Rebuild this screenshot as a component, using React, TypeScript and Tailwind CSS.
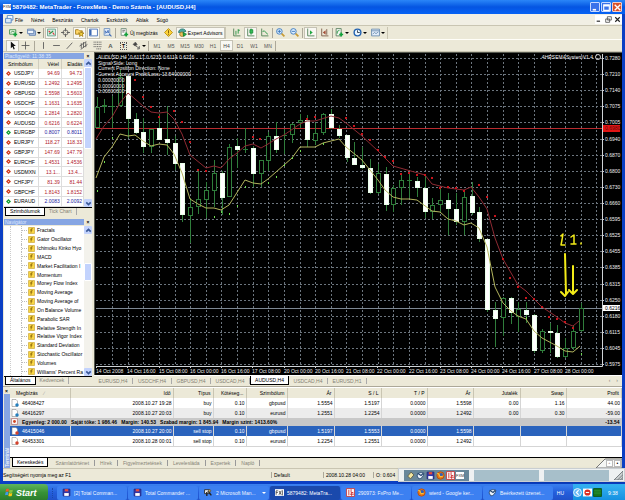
import type { ReactNode } from 'react';

type Candle = [top: number, bottom: number, high: number, low: number, down: number];

const candles: Candle[] = [
  [107, 128, 97, 128, 0], [105, 107, 99, 113, 0], [106, 106, 96, 128, 0], [77, 106, 70, 107, 0],
  [76, 119, 76, 138, 1], [119, 133, 113, 134, 1], [132, 147, 118, 153, 1], [129, 147, 129, 153, 0],
  [128, 140, 114, 140, 1], [139, 143, 106, 155, 1], [143, 164, 136, 170, 1], [163, 215, 163, 222, 1],
  [207, 216, 198, 243, 0], [199, 207, 171, 214, 0], [190, 200, 182, 218, 0], [173, 191, 160, 207, 0],
  [173, 198, 171, 215, 1], [147, 197, 144, 197, 0], [146, 150, 138, 168, 1], [149, 149, 128, 153, 0],
  [148, 174, 146, 187, 1], [160, 174, 160, 187, 0], [136, 161, 132, 171, 0], [136, 150, 122, 153, 1],
  [135, 135, 129, 154, 0], [124, 135, 123, 143, 0], [120, 123, 114, 128, 0], [120, 140, 115, 147, 1],
  [133, 141, 123, 145, 0], [114, 133, 113, 135, 0], [114, 128, 109, 129, 1], [129, 136, 125, 138, 1],
  [135, 158, 135, 162, 1], [158, 165, 142, 165, 1], [165, 168, 147, 169, 1], [168, 193, 159, 194, 1],
  [173, 193, 164, 194, 0], [174, 205, 167, 211, 1], [188, 205, 185, 212, 0], [180, 188, 174, 205, 0],
  [180, 180, 172, 198, 0], [181, 188, 177, 197, 1], [188, 212, 175, 218, 1], [205, 212, 198, 219, 0],
  [200, 205, 188, 213, 0], [200, 209, 193, 235, 1], [209, 222, 193, 225, 1], [197, 222, 190, 235, 0],
  [196, 213, 182, 215, 1], [212, 239, 207, 242, 1], [239, 310, 239, 312, 1], [310, 319, 302, 347, 1],
  [298, 318, 297, 336, 0], [298, 313, 297, 324, 1], [309, 317, 302, 332, 0], [310, 315, 302, 323, 1],
  [315, 351, 314, 353, 1], [331, 351, 329, 353, 0], [331, 333, 323, 353, 1], [333, 357, 325, 358, 1],
  [348, 357, 338, 358, 0], [331, 348, 325, 350, 0], [308, 331, 303, 332, 0],
];

const upperLine =
  '96,139 104,126 112,117 120,103 128,93 135,99 143,106 151,112 159,113 167,112 174,119 182,134 190,155 206,168 214,166 221,168 229,159 237,153 245,146 253,144 261,148 268,144 276,139 284,135 300,124 307,121 315,121 331,116 339,118 346,123 362,136 378,151 393,166 425,175 432,184 448,188 456,189 464,190 471,187 479,197 487,209 495,238 503,259 518,285 526,291 534,299 542,307 557,317 565,323 573,326 579,321';
const lowerLine =
  '96,178 104,157 112,147 120,134 128,136 135,135 143,141 151,146 159,144 167,145 174,154 182,173 190,199 198,204 206,208 214,208 221,210 229,205 245,180 253,183 261,184 268,179 276,172 284,165 292,158 300,147 315,147 323,143 339,139 346,147 362,160 378,180 385,190 393,197 401,199 409,199 417,200 432,211 440,212 448,219 456,221 464,225 471,223 479,228 487,247 495,287 503,303 511,311 518,316 526,319 534,331 542,338 557,346 565,351 573,352 580,346';

const redDots = [
  [135, 80], [143, 97], [151, 107], [159, 117], [174, 111], [182, 122], [190, 142], [198, 170], [206, 171],
  [253, 137], [260, 139], [307, 119], [315, 117], [346, 118], [354, 126], [362, 134], [370, 140], [378, 150],
  [385, 157], [393, 161], [401, 174], [409, 173], [417, 175], [425, 175], [432, 178], [440, 188], [448, 187],
  [456, 188], [464, 191], [479, 185], [487, 197], [495, 216], [503, 259], [510, 278], [518, 287], [526, 298],
  [534, 299], [542, 307], [549, 317], [557, 319], [565, 322], [573, 328],
];
const greenDots = [
  [97, 191], [104, 162], [112, 138], [214, 217], [221, 212], [229, 214], [237, 206], [245, 187], [268, 183],
  [276, 177], [284, 165], [292, 158], [300, 151], [323, 144], [526, 318], [581, 354],
];

const prices = [
  '0.7280', '0.7210', '0.7140', '0.7075', '0.7005', '0.6940', '0.6870', '0.6800', '0.6730', '0.6660',
  '0.6595', '0.6525', '0.6455', '0.6385', '0.6315', '0.6250', '0.6180', '0.6115', '0.6045', '0.5975',
];
const times = [
  '14 Oct 2008', '14 Oct 16:00', '15 Oct 08:00', '16 Oct 00:00', '16 Oct 16:00', '17 Oct 08:00',
  '20 Oct 00:00', '20 Oct 16:00', '21 Oct 08:00', '22 Oct 00:00', '22 Oct 16:00', '23 Oct 08:00',
  '24 Oct 00:00', '24 Oct 16:00', '27 Oct 08:00', '28 Oct 00:00',
];
const notes = [
  'AUDUSD,H4  0.6117 0.6233 0.6114 0.6216', 'Signal Side: Long', 'Current Position Direction: None',
  'Current Account Profit/Loss: 13.54000000', '0.00000000', '0.00000000', '0.00000000',
];

const quotes = [
  ['USDJPY', '94.69', '94.73'], ['EURUSD', '1.2492', '1.2495'], ['GBPUSD', '1.5598', '1.5603'],
  ['USDCHF', '1.1631', '1.1635'], ['USDCAD', '1.2814', '1.2820'], ['AUDUSD', '0.6216', '0.6224'],
  ['EURGBP', '0.8007', '0.8011'], ['EURJPY', '118.27', '118.33'], ['GBPJPY', '147.69', '147.79'],
  ['EURCHF', '1.4531', '1.4536'], ['USDMXN', '13.1...', '13.4...'], ['CHFJPY', '81.39', '81.44'],
  ['GBPCHF', '1.8143', '1.8152'], ['EURAUD', '2.0083', '2.0092'],
];
const rising = ['EURGBP', 'EURAUD'];

const indicators = [
  'Fractals', 'Gator Oscillator', 'Ichimoku Kinko Hyo', 'MACD', 'Market Facilitation I', 'Momentum',
  'Money Flow Index', 'Moving Average', 'Moving Average of', 'On Balance Volume', 'Parabolic SAR',
  'Relative Strength In', 'Relative Vigor Index', 'Standard Deviation', 'Stochastic Oscillator', 'Volumes',
  "Williams' Percent Ra",
];

const orders = [
  ['46408427', '2008.10.27 19:28', 'buy', '0.10', 'gbpusd', '1.5554', '1.5197', '0.0000', '1.5598', '0.00', '1.16', '44.00'],
  ['46416297', '2008.10.27 20:03', 'buy', '0.10', 'eurusd', '1.2551', '1.2254', '0.0000', '1.2492', '0.00', '0.30', '-59.00'],
];
const pending = [
  ['46415046', '2008.10.27 20:00', 'sell stop', '0.10', 'gbpusd', '1.5197', '1.5553', '0.0000', '1.5598', '', '', ''],
  ['46453301', '2008.10.28 00:01', 'sell stop', '0.10', 'eurusd', '1.2254', '1.2551', '0.0000', '1.2492', '', '', ''],
];
const columns = ['Megbízás', 'Idő', 'Típus', 'Kötéseg...', 'Szimbólum', 'Ár', 'S / L', 'T / P', 'Ár', 'Jutalék', 'Swap', 'Profit'];

function Glyph({ children }: { readonly children: ReactNode }) {
  return (
    <svg viewBox="0 0 16 16" className="size-[9px] shrink-0" fill="none" stroke="#555" strokeWidth="1.5" aria-hidden="true">
      {children}
    </svg>
  );
}

const floppy = (
  <>
    <path d="M2 2h12v12H2z" fill="#3438a8" stroke="#22267c" />
    <path d="M5 2h6v4H5z" fill="#e64b3c" stroke="none" />
    <path d="M4 9h8v5H4z" fill="#fff" stroke="none" />
  </>
);
const firefox = (
  <>
    <circle cx="8" cy="8" r="6.5" fill="#e8761a" stroke="#b84d0c" />
    <circle cx="9" cy="7" r="3.5" fill="#345fb3" stroke="none" />
    <path d="M2 5c3-1 4 1 4 3s3 3 6 1" stroke="#ffc12e" strokeWidth="2" />
  </>
);
const bird = (
  <>
    <path d="M2 9c0-5 6-8 12-5-1 6-4 10-9 10z" fill="#e8f1fa" stroke="#24446d" />
    <path d="M3 4l6 4 4-4" stroke="#24446d" strokeWidth="2" />
  </>
);
const redGrid = (
  <>
    <path d="M1 1h14v14H1z" fill="#fff" stroke="#c33" />
    <path d="M5 3v10M9 2v6h4M7 11h7M10 9v5" stroke="#c22" />
  </>
);
const plus = <path d="M11 8v7M7.500 11.500h7" stroke="#12a33a" strokeWidth="3" />;

function Separator() {
  return <div className="h-[10px] w-px bg-[#aca899]" />;
}

function Tool({ label, pressed, drop, children }: {
  readonly label: string;
  readonly pressed?: boolean;
  readonly drop?: boolean;
  readonly children: ReactNode;
}) {
  return (
    <button
      aria-label={label}
      className={pressed
        ? 'flex h-[12px] w-[13px] items-center justify-center border border-[#c5c2b4] bg-[#f9f8f3]'
        : drop
          ? 'flex h-[12px] w-[17px] items-center justify-center gap-px'
          : 'flex h-[12px] w-[13px] items-center justify-center'}
    >
      <Glyph>{children}</Glyph>
      {drop && <span className="border-x-2 border-t-2 border-x-transparent border-t-black" />}
    </button>
  );
}

const timeframes = ['M1', 'M5', 'M15', 'M30', 'H1', 'H4', 'D1', 'W1', 'MN'];

function Toolbars() {
  return (
    <div className="bg-[#ece9d8]">
      <div className="flex h-[14px] items-center border-t border-[#c9c5b2]">
        <div className="flex items-center gap-px border-r border-[#c9c5b2] pl-[4px]">
          <Tool label="Új grafikon" drop><path d="M1 3h11v8H1z" fill="#e8f6e4" stroke="#398a46" /><path d="M3 8l3-2 4 1" stroke="#398a46" />{plus}</Tool>
          <Tool label="Profilok" drop><path d="M4 5h11v8H4z" fill="#b9cde8" stroke="#5d7eae" /><path d="M1 2h11v8H1z" fill="#eef4fb" stroke="#5d7eae" /><path d="M1 4h11" stroke="#5d7eae" /></Tool>
          <Separator />
          <Tool label="Piacfigyelő" pressed><path d="M1 2h14v12H1z" fill="#dcefe5" stroke="#5d9b83" /><path d="M3 5l3 3M10 8l3 4" stroke="#d33" strokeWidth="2" /><path d="M4 11l7-6" stroke="#199040" strokeWidth="2" /></Tool>
          <Tool label="Adatablak"><circle cx="8" cy="8" r="4.500" /><path d="M8 0v6M8 10v6M0 8h6M10 8h6" /></Tool>
          <Tool label="Navigátor" pressed><path d="M1 3h5l2 2h5v6H1z" fill="#ffd768" stroke="#a27b15" /><path d="M11 6l1 3 4 0-3 2 1 4-3-2-3 2 1-4-3-2h4z" fill="#ffe34d" stroke="#a27b15" /></Tool>
          <Tool label="Terminál" pressed><path d="M1 2h14v12H1z" fill="#fff" stroke="#3c69b4" /><path d="M3 3v10" stroke="#3c69b4" strokeWidth="3" /></Tool>
          <Tool label="Stratégia teszter"><path d="M2 1h10v12H2z" fill="#e4eefa" stroke="#6a8dbd" /><path d="M4 10V5l3 4 2-5 1 5" stroke="#3c69b4" /><path d="M11 11l4 4" stroke="#3c69b4" strokeWidth="2" /></Tool>
          <Separator />
          <button className="flex items-center gap-px pl-[3px] pr-[3px]">
            <Glyph><path d="M2 1h9v12H2z" fill="#fff" stroke="#6d8a76" /><path d="M4 4h5M4 7h4" />{plus}</Glyph>
            Új megbízás
          </button>
          <Tool label="Figyelmeztetés"><path d="M8 1l7 7-7 7-7-7z" fill="#ffd43a" stroke="#b28700" /><path d="M8 4v5M8 10v2" stroke="#6b4d00" /></Tool>
          <button className="flex h-[12px] items-center gap-px border border-[#c5c2b4] bg-[#f9f8f3] px-px">
            <Glyph><path d="M1 8c0-8 12-8 13-2l-6 2z" fill="#49a79f" stroke="#28766d" /><circle cx="7" cy="11" r="4" fill="#e9be5d" stroke="#9a7629" /><path d="M9 8l6 3-5 4z" fill="#26b34a" stroke="#0f7d2c" /></Glyph>
            Expert Advisors
          </button>
        </div>
        <div className="flex items-center gap-px border-r border-[#c9c5b2] pl-[4px]">
          <Tool label="Oszlopok"><path d="M3 1v13h12" stroke="#477a4d" /><path d="M7 5v7M11 2v8M11 4h3" stroke="#168d34" /></Tool>
          <Tool label="Gyertyák" pressed><path d="M3 1v13h12" stroke="#477a4d" /><path d="M9 1v11" stroke="#168d34" /><path d="M7 3h5v6H7z" fill="#36bd58" stroke="#168d34" /></Tool>
          <Tool label="Vonal"><path d="M3 1v13h12" stroke="#477a4d" /><path d="M5 7c3-6 4 2 9 4" stroke="#168d34" /></Tool>
          <Separator />
          <Tool label="Nagyítás"><circle cx="6" cy="6" r="5" fill="#d9ecff" stroke="#3472b8" /><path d="M6 3v6M3 6h6" stroke="#3472b8" /><path d="M10 10l5 5" stroke="#c79b35" strokeWidth="3" /></Tool>
          <Tool label="Kicsinyítés"><circle cx="6" cy="6" r="5" fill="#d9ecff" stroke="#3472b8" /><path d="M3 6h6" stroke="#3472b8" /><path d="M10 10l5 5" stroke="#c79b35" strokeWidth="3" /></Tool>
          <Separator />
          <Tool label="Automatikus görgetés" pressed><path d="M3 1v13h12" stroke="#477a4d" /><path d="M7 4l5 4-5 4z" fill="#24a844" stroke="none" /></Tool>
          <Tool label="Eltolás"><path d="M3 1v13h12M12 2v10" stroke="#75533f" /><path d="M10 4L5 8l5 4z" fill="#a24d36" stroke="none" /></Tool>
          <Separator />
          <Tool label="Indikátorok" drop><path d="M2 1h9v13H2z" fill="#f1f6ef" stroke="#577d5c" /><path d="M4 10V6l4-2" stroke="#168d34" />{plus}</Tool>
          <Tool label="Periódusok" drop><circle cx="8" cy="8" r="6" fill="#eaf5ff" stroke="#2362b0" strokeWidth="2.500" /><path d="M8 4v4h4" stroke="#234" /></Tool>
          <Tool label="Sablonok" drop><path d="M1 2h14v12H1z" fill="#e4eefa" stroke="#6688ad" /><path d="M1 5h14M3 11l3-3 3 2 4-3" stroke="#6688ad" /></Tool>
        </div>
      </div>
      <div className="flex h-[13px] items-center border-y border-t-[#fffef8] border-b-[#c9c5b2]">
        <div className="flex items-center pl-[3px]">
          <Tool label="Kurzor" pressed><path d="M5 1v12l3-3 2 5 2-1-2-5h4z" fill="#111" stroke="none" /></Tool>
          <Tool label="Célkereszt"><path d="M8 1v14M1 8h14" /></Tool>
          <div className="px-[2px]"><Separator /></div>
          <Tool label="Függőleges vonal"><path d="M8 2v12" /></Tool>
          <Tool label="Vízszintes vonal"><path d="M2 8h12" /></Tool>
          <Tool label="Trendvonal"><path d="M3 14L13 3" /></Tool>
          <div className="px-px"><Tool label="Csatorna"><path d="M1 9l12-8M3 15l12-9M4 4v9M8 2v10M12 2v9" /></Tool></div>
          <Tool label="Fibonacci"><path d="M1 2h14M1 6h14M1 10h14M6 14h9" strokeDasharray="2 1" /></Tool>
          <button className="w-[13px] text-center font-bold text-[6px] text-[#555]">A</button>
          <button className="flex w-[13px] justify-center"><span className="border border-dotted border-[#555] px-px font-bold leading-[6px]">T</span></button>
          <Tool label="Nyilak" drop><path d="M2 6l4-4 3 4-3 3z" fill="#444" /><path d="M7 9l6 4M13 9v5H9" /></Tool>
          <div className="px-px"><Separator /></div>
          {timeframes.map((t) => (
            <button key={t} className={t === 'H4' ? 'h-[11px] w-[13px] border border-[#c5c2b4] bg-[#f9f8f3] text-[#444]' : 'w-[14px] text-[#555]'}>{t}</button>
          ))}
          <Separator />
        </div>
      </div>
    </div>
  );
}

function Scrollbar({ thumb }: { readonly thumb: string }) {
  return (
    <div className="flex w-[8px] shrink-0 flex-col bg-[#f3f2ec]">
      <button aria-label="Fel" className="flex h-[8px] items-center justify-center rounded-[1px] bg-[#c3d3fd]"><Glyph><path d="M4 10l4-4 4 4" stroke="#3b5998" strokeWidth="3" /></Glyph></button>
      <div className="flex-1"><div className={thumb} /></div>
      <button aria-label="Le" className="flex h-[8px] items-center justify-center rounded-[1px] bg-[#c3d3fd]"><Glyph><path d="M4 6l4 4 4-4" stroke="#3b5998" strokeWidth="3" /></Glyph></button>
    </div>
  );
}

function PanelTitle({ title }: { readonly title: string }) {
  return (
    <div className="flex h-[6px] items-center">
      <span className="flex h-full flex-1 items-center bg-[#86a5e3] pl-px text-[#dce8ff]">{title}</span>
      <button aria-label="Bezárás" className="w-[8px] font-bold">×</button>
    </div>
  );
}

function PanelTabs({ tabs }: { readonly tabs: string[] }) {
  return (
    <div className="flex h-[10px] shrink-0 items-start border-t border-black bg-[#ece9d8]">
      {tabs.map((tab, i) => (
        <button key={tab} className={i === 0
          ? 'ml-px h-[8px] border-x border-b border-black bg-white px-[4px] leading-[7px]'
          : 'border-r border-[#aaa] px-[4px] leading-[7px] text-[#858275]'}>{tab}</button>
      ))}
    </div>
  );
}

function MarketWatch() {
  return (
    <section className="flex h-[164px] flex-col">
      <PanelTitle title="Piacfigyelő: 11:38:35" />
      <div className="flex h-[148px] overflow-hidden bg-white">
        <table className="h-full flex-1 table-fixed border-collapse">
          <colgroup><col className="w-[34px]" /><col className="w-[23px]" /><col className="w-[22px]" /></colgroup>
          <thead>
            <tr className="h-[10px] bg-[#ece9d8]">
              <th className="border-r border-[#d0cdbe] pl-[4px] text-left font-normal">Szimbólum</th>
              <th className="border-r border-[#d0cdbe] pr-[2px] text-right font-normal">Vétel</th>
              <th className="pr-px text-right font-normal">Eladás</th>
            </tr>
          </thead>
          <tbody>
            {quotes.map(([symbol, bid, ask]) => {
              const up = rising.includes(symbol);
              return (
                <tr key={symbol} className={up ? 'border-b border-[#ddd] text-[#1a1aa0]' : 'border-b border-[#ddd] text-[#b0202a]'}>
                  <td className="border-r border-[#ddd] pl-[2px]">
                    <span className="flex items-center gap-[3px] text-black">
                      <svg viewBox="0 0 10 10" className="size-[5px] shrink-0" aria-hidden="true"><path d="M5 0l5 5-5 5-5-5z" fill={up ? '#17a035' : '#d13f22'} /><circle cx="5" cy="5" r="1" fill="#fff" /></svg>
                      {symbol}
                    </span>
                  </td>
                  <td className="border-r border-[#ddd] pr-px text-right">{bid}</td>
                  <td className="border-r border-[#ddd] pr-px text-right">{ask}</td>
                </tr>
              );
            })}
          </tbody>
        </table>
        <Scrollbar thumb="h-[82px] rounded-[1px] border border-white bg-[#c3d3fd]" />
      </div>
      <PanelTabs tabs={['Szimbólumok', 'Tick Chart']} />
    </section>
  );
}

function Navigator() {
  return (
    <section className="mt-[2px] flex flex-1 flex-col">
      <PanelTitle title="Navigátor" />
      <div className="mt-px flex h-[150px] bg-white">
        <ul className="ml-[6px] flex min-w-0 flex-1 flex-col border-l border-dotted border-[#ccc] pl-[10px]">
          {indicators.map((name) => (
            <li key={name} className="flex flex-1 items-center gap-[2px] whitespace-nowrap border-l border-dotted border-[#bbb]">
              <span className="-mr-px w-[5px] shrink-0 border-t border-dotted border-[#bbb]" />
              <svg viewBox="0 0 14 14" className="size-[7px] shrink-0" aria-hidden="true"><path d="M1 1h12v12H1z" fill="#f9d645" stroke="#bb8f17" /><path d="M9 3c-3-1-2 3-3 8M4 6h5" fill="none" stroke="#7a5600" strokeWidth="1.500" /></svg>
              {name}
            </li>
          ))}
        </ul>
        <Scrollbar thumb="mt-[29px] h-[18px] rounded-[1px] border border-white bg-[#c3d3fd]" />
      </div>
      <PanelTabs tabs={['Általános', 'Kedvencek']} />
    </section>
  );
}

const candleX = (i: number) => Math.round(96.5 + 7.8125 * i);
const rowY = (i: number) => Math.round(58 + 16.11 * i) + 0.5;
const timeX = (i: number) => Math.round(96 + 31.25 * i);

function Chart() {
  return (
    <svg viewBox="95 53 527 322" className="block h-auto w-full bg-black" role="img" aria-label="AUDUSD,H4">
      <g stroke="#6c757e" strokeWidth="1" strokeDasharray="2 2" shapeRendering="crispEdges">
        {prices.map((p, i) => <path key={p} d={`M96 ${rowY(i)}H602`} />)}
        {Array.from({ length: 32 }, (_, i) => <path key={i} d={`M${Math.round(112 + 15.625 * i) + 0.5} 54V366`} />)}
      </g>
      <path d="M96 128.500H602" stroke="#b92b2f" />
      <path d="M96 308.500H602" stroke="#7d8793" />
      {candles.map(([top, bottom, high, low, down], i) => (
        <g key={i} stroke="#2f7d3b" shapeRendering="crispEdges">
          <path d={`M${candleX(i) + 0.5} ${high}V${low}`} />
          {top === bottom
            ? <path d={`M${candleX(i) - 2} ${top + 0.5}h5`} />
            : <rect x={candleX(i) - 1.5} y={top + 0.5} width="4" height={bottom - top - 1} fill={down ? '#fff' : '#000'} stroke={down ? '#e9ffe9' : '#2f7d3b'} />}
        </g>
      ))}
      <polyline points={upperLine} fill="none" stroke="#8f2a33" />
      <polyline points={lowerLine} fill="none" stroke="#b3b55e" />
      {redDots.map(([x, y]) => <rect key={`${x}-${y}`} x={x - 1} y={y - 1} width="2" height="2" fill="#c8141c" />)}
      {greenDots.map(([x, y]) => <rect key={`${x}-${y}`} x={x} y={y - 1} width="1" height="2" fill="#6fdc52" />)}

      {/* hand-drawn marks */}
      <g fill="none" stroke="#f4ec18" strokeWidth="1.500" strokeLinecap="round" strokeLinejoin="round">
        <path d="M561 236l2-2-1 6-1 5h4M571 237l3-2v8M571 244h5M581 243v1" />
        <path d="M565 254l1 40M561 292l4 4 3-4M573 266v26M569 290l4 4 4-4" strokeWidth="2" />
      </g>

      <path d="M602.500 54V366.500M96 366.500H602.500" stroke="#cfd3d6" fill="none" />
      <rect x="603" y="125" width="17" height="7" fill="#e01515" />
      <rect x="603" y="305" width="17" height="6" fill="#fff" />
      <g fill="#eee" fontSize="5">
        {prices.map((p, i) => <text key={p} x="605" y={rowY(i) + 1.5}>{p}</text>)}
        {times.map((t, i) => <text key={t} x={timeX(i)} y="373">{t}</text>)}
        {notes.map((n, i) => <text key={i} x="98" y={Math.round(59 + 5.7 * i)} xmlSpace="preserve">{n}</text>)}
        <text x="593" y="59" textAnchor="end">4HRSEMASystemV1.4</text>
        <text x="605" y="130" fill="#5d0707">0.6980</text>
        <text x="605" y="310" fill="#000">0.6216</text>
      </g>
      <g stroke="#cfcfcf" fill="none">
        <circle cx="598" cy="57" r="2.500" />
        <path d="M597 58c1 1 1 1 2 0" strokeWidth="0.500" />
        {prices.map((p, i) => <path key={p} d={`M602 ${rowY(i)}h2`} />)}
        {times.map((t, i) => <path key={t} d={`M${timeX(i) + 0.5} 366v2`} />)}
      </g>
    </svg>
  );
}

const chartTabs = ['EURUSD,H4', 'USDCHF,H4', 'GBPUSD,H4', 'USDCAD,H4', 'AUDUSD,H4', 'USDCAD,H4', 'EURUSD,H1'];
const terminalTabs = ['Kereskedés', 'Számlatörténet', 'Hírek', 'Figyelmeztetések', 'Levelesláda', 'Expertek', 'Napló'];

function OrderRow({ cells, tone, mark }: { readonly cells: string[]; readonly tone: string; readonly mark: string }) {
  return (
    <tr className={tone}>
      {cells.map((cell, i) => (
        <td key={i} className={i === 0 ? 'border-r border-[#d5d5d5] pl-px' : 'border-r border-[#d5d5d5] pr-px text-right'}>
          {i === 0 ? (
            <span className="flex items-center gap-[3px]">
              <svg viewBox="0 0 16 16" className="size-[8px] shrink-0" aria-hidden="true"><path d="M2 1h8l3 3v11H2z" fill="#fff" stroke="#777" /><circle cx="12" cy="12" r="3.500" fill={mark} /></svg>
              {cell}
            </span>
          ) : cell}
        </td>
      ))}
    </tr>
  );
}

function Terminal() {
  return (
    <section className="flex border-t border-[#aca899] bg-[#ece9d8]">
      <div className="flex w-[7px] shrink-0 flex-col items-center">
        <button aria-label="Bezárás" className="h-[7px] font-bold leading-[6px]">×</button>
        <span className="flex w-[6px] flex-1 rotate-180 items-center bg-[#86a5e3] pt-px leading-[6px] text-white [writing-mode:vertical-rl]">Terminál</span>
      </div>
      <div className="min-w-0 flex-1">
        <div className="h-[71px] border-b border-black bg-white pt-px">
          <table className="h-[59px] w-full table-fixed border-collapse">
            <colgroup>
              <col className="w-[60px]" /><col className="w-[103px]" /><col className="w-[40px]" /><col className="w-[33px]" />
              <col className="w-[41px]" /><col className="w-[47px]" /><col className="w-[47px]" /><col className="w-[46px]" />
              <col className="w-[46px]" /><col className="w-[47px]" /><col className="w-[46px]" /><col />
            </colgroup>
            <thead>
              <tr className="h-[10px] bg-[#ece9d8]">
                {columns.map((name, i) => (
                  <th key={i} className={i === 0 ? 'border-r border-[#c9c5b2] pl-[6px] text-left font-normal' : 'whitespace-nowrap border-r border-[#c9c5b2] pr-[2px] text-right font-normal'}>
                    {name}{i === 0 && <span className="pl-[6px] text-[#999]">∕</span>}
                  </th>
                ))}
              </tr>
            </thead>
            <tbody>
              <OrderRow cells={orders[0]} tone="bg-white" mark="#247fbd" />
              <OrderRow cells={orders[1]} tone="bg-[#ececec]" mark="#247fbd" />
              <tr className="bg-[#c8c8c8] font-bold">
                <td colSpan={11} className="pl-px">
                  <span className="flex items-center gap-[4px]">
                    <svg viewBox="0 0 12 12" className="size-[7px] shrink-0" aria-hidden="true"><path d="M1 1h10v10H1z" fill="#fff" stroke="#a55" /><circle cx="6" cy="6" r="2.500" fill="#d24721" /></svg>
                    <span className="whitespace-pre">Egyenleg: 2 000.00   Saját tőke: 1 986.46   Margin: 140.53   Szabad margin: 1 845.94   Margin szint: 1413.60%</span>
                  </span>
                </td>
                <td className="pr-[2px] text-right">-13.54</td>
              </tr>
              <OrderRow cells={pending[0]} tone="bg-[#2a63bd] text-white" mark="#d4402a" />
              <OrderRow cells={pending[1]} tone="border-b border-[#d5d5d5] bg-white" mark="#d4402a" />
            </tbody>
          </table>
        </div>
        <div className="flex h-[10px] items-start">
          {terminalTabs.map((tab, i) => (
            <button key={tab} className={i === 0
              ? 'mx-[2px] h-[9px] border-x border-b border-black bg-white px-[4px] leading-[8px]'
              : 'my-[2px] border-r border-[#999] px-[5px] leading-[6px] text-[#858275]'}>{tab}</button>
          ))}
        </div>
      </div>
    </section>
  );
}

function StatusBar() {
  return (
    <div className="relative flex h-[13px] items-center border-t border-[#c9c5b2] bg-[#ece9d8]">
      <span className="w-[268px]">Segítségért nyomja meg az F1</span>
      <span className="w-[52px] border-l border-[#aca899] pl-[2px]">Default</span>
      <span className="w-[50px] border-l border-[#aca899] pl-[2px]">2008.10.28 04:00</span>
      <span className="border-l border-[#aca899] pl-[2px]">O: 0.604</span>
      {/* docked launcher floating over the status bar */}
      <div className="absolute bottom-[-1px] right-[-3px] flex h-[14px] w-[227px] items-center gap-[5px] border border-[#c9ced2] bg-[#eef1f2] pl-[5px] shadow">
        <div className="flex h-[11px] w-[65px] items-center gap-px bg-[#68879a] pl-[2px]">
          <Glyph><path d="M3 9l6-7 5 5-6 7z" fill="#f2e6a0" stroke="#554" /></Glyph>
          <Glyph>{bird}</Glyph>
          <Glyph>{floppy}</Glyph>
          <Glyph>{firefox}</Glyph>
          <Glyph>{redGrid}</Glyph>
          <span className="bg-white text-[4px] leading-[7px] text-[#333]">FXM</span>
        </div>
        <div className="h-[11px] w-[65px] bg-[#a7bfca]" />
        <div className="h-[11px] w-[65px] bg-[#a7bfca]" />
        <svg viewBox="0 0 10 10" className="size-[9px]" aria-hidden="true"><path d="M0 10L10 0v10zM4 10l6-6M7 10l3-3" fill="#cbd0d2" stroke="#70777a" /></svg>
      </div>
      <div className="absolute -top-[11px] right-0 flex h-[10px] w-[26px] items-center justify-end">
        <svg viewBox="0 0 26 10" className="absolute inset-0 size-full" aria-hidden="true"><path d="M0 10L9 1H26V10z" fill="#f5f6f4" stroke="#777" /></svg>
        <button aria-label="Beállítás" className="relative mr-px h-[7px] w-[7px] border border-[#bbb] bg-white leading-[5px]">◦</button>
        <button aria-label="Menü" className="relative mr-px h-[7px] w-[7px] border border-[#bbb] bg-white leading-[5px]">•</button>
      </div>
    </div>
  );
}

const tasks = [
  { name: '[2] Total Comman...', icon: floppy },
  { name: 'Total Commander ...', icon: floppy },
  { name: '2 Microsoft Man...', icon: <><path d="M1 3h9v7H1z" fill="#eee" stroke="#222" /><path d="M7 5l6 8M5 7v7" stroke="#222" strokeWidth="2.500" /><circle cx="10" cy="5" r="2" fill="#dcb545" /></>, drop: true },
  { name: '5879482: MetaTra...', icon: <><path d="M0 2h16v12H0z" fill="#fff" stroke="none" /><path d="M2 12V5h3M2 8h3M7 5l4 7M11 5l-4 7M13 4v9" stroke="#444" /></>, active: true },
  { name: '290973: FxPro Me...', icon: redGrid },
  { name: 'wierd - Google ker...', icon: firefox },
  { name: 'Beérkezett üzenet...', icon: bird },
];

function Taskbar() {
  return (
    <footer className="flex h-[17px] items-center bg-linear-to-b from-[#3b81f0] via-[#245edb] to-[#1f50c8] text-white">
      <button className="flex h-full w-[48px] items-center gap-[2px] rounded-r-[4px] bg-linear-to-b from-[#5fb55c] via-[#379237] to-[#2b7a2b] pl-[5px] text-[9px] font-bold italic">
        <svg viewBox="0 0 16 16" className="size-[9px]" aria-hidden="true">
          <path d="M2 2c2-1 4-1 5 0L6 7c-1-1-3-1-5 0z" fill="#f05a28" />
          <path d="M8 3c2 1 4 1 6 0l-1 5c-2 1-4 1-6 0z" fill="#84c441" />
          <path d="M1 8c2-1 4-1 5 0l-1 5c-1-1-3-1-5 0z" fill="#3c9be8" />
          <path d="M7 9c2 1 4 1 6 0l-1 5c-2 1-4 1-6 0z" fill="#fbc913" />
        </svg>
        Start
      </button>
      <div className="mx-[4px] h-[10px] border-l border-dotted border-[#1a48ac]" />
      <div className="flex flex-1 gap-px">
        {tasks.map(({ name, icon, active, drop }) => (
          <button key={name} className={active
            ? 'flex h-[14px] w-[70px] items-center gap-[3px] rounded-[2px] bg-[#1a49ac] pl-[5px]'
            : 'flex h-[14px] w-[70px] items-center gap-[3px] rounded-[2px] bg-[#3c80f1] pl-[5px] text-[#f0f5ff]'}>
            <Glyph>{icon}</Glyph>
            <span className="whitespace-nowrap">{name}</span>
            {drop && <span className="ml-auto mr-[3px] border-x-2 border-t-2 border-x-transparent border-t-white" />}
          </button>
        ))}
      </div>
      <span className="mr-[9px]">HU</span>
      <div className="flex h-full w-[52px] items-center gap-px bg-linear-to-b from-[#35b3f2] to-[#128fe0]">
        <Glyph><circle cx="8" cy="8" r="7" fill="#66b9f5" stroke="#fff" /><path d="M10 4L6 8l4 4" stroke="#fff" strokeWidth="2" /></Glyph>
        <Glyph><path d="M0 1h16v14H0z" fill="#fff" stroke="none" /><circle cx="8" cy="8" r="5.500" fill="#dd2c20" stroke="none" /><path d="M5 8h6" stroke="#fff" strokeWidth="2" /></Glyph>
        <Glyph><path d="M1 1h14v14H1z" fill="#16781d" stroke="#0a4f10" /><path d="M2 5h12M2 9h12" stroke="#2e9636" /></Glyph>
        <span className="pl-[5px]">9:38</span>
      </div>
    </footer>
  );
}

export default function App() {
  return (
    <div className="flex w-full flex-col bg-[#0b3fc4] font-['Liberation_Sans',Arial,sans-serif] text-[5px] leading-[6px] text-black">
      <header className="flex h-[14px] items-center gap-px bg-linear-to-b from-[#2a86f8] via-[#0555e2] to-[#0562f5] pl-[3px] pr-[3px] text-white">
        <span className="bg-white text-[4px] leading-[6px] text-[#333]">FXM</span>
        <h1 className="flex-1 text-[6px] font-bold">5879482: MetaTrader - ForexMeta - Demo Számla - [AUDUSD,H4]</h1>
        <button aria-label="Kis méret" className="flex size-[10px] items-center justify-center rounded-[1px] border border-[#c7d9ff] bg-[#3a73ea]"><Glyph><path d="M3 12h6" stroke="#fff" strokeWidth="3" /></Glyph></button>
        <button aria-label="Teljes méret" className="flex size-[10px] items-center justify-center rounded-[1px] border border-[#c7d9ff] bg-[#3a73ea]"><Glyph><path d="M3 3h10v10H3zM3 5h10" stroke="#fff" strokeWidth="2" /></Glyph></button>
        <button aria-label="Bezárás" className="flex size-[10px] items-center justify-center rounded-[1px] border border-[#f6cfc4] bg-[#d9512c]"><Glyph><path d="M3 3l10 10M13 3L3 13" stroke="#fff" strokeWidth="2.500" /></Glyph></button>
      </header>
      <main className="mx-[3px]">
        <nav className="flex h-[11px] items-center bg-[#f1efe4] pl-[2px]">
          <Glyph><path d="M4 1h10v8H4z" fill="#fff" stroke="#4a7dc0" /><path d="M1 6h10v8H1z" fill="#dbe9fa" stroke="#4a7dc0" /></Glyph>
          <div className="flex flex-1 gap-[8px] pl-px">
            {['File', 'Nézet', 'Beszúrás', 'Chartok', 'Eszközök', 'Ablak', 'Súgó'].map((item) => <button key={item}>{item}</button>)}
          </div>
          <div className="flex bg-white">
            <button aria-label="Grafikon kis méret"><Glyph><path d="M3 11h6" stroke="#222" strokeWidth="2" /></Glyph></button>
            <button aria-label="Grafikon visszaállítása"><Glyph><path d="M6 3h7v6H6zM3 7h7v6H3z" fill="#fff" /></Glyph></button>
            <button aria-label="Grafikon bezárása"><Glyph><path d="M4 4l8 8M12 4l-8 8" stroke="#222" strokeWidth="2" /></Glyph></button>
          </div>
        </nav>
        <Toolbars />
        <div className="flex bg-[#ece9d8]">
          <aside className="flex w-[89px] shrink-0 flex-col pl-px pt-px">
            <MarketWatch />
            <Navigator />
          </aside>
          <div className="ml-[2px] min-w-0 flex-1">
            <div className="border-l border-t border-[#55584f]"><Chart /></div>
            <div className="flex h-[11px] items-start border-t border-white text-[#858275]">
              {chartTabs.map((tab, i) => (
                <button key={i} className={i === 4
                  ? 'h-[9px] w-[39px] border-x border-b border-black bg-white leading-[8px] text-black'
                  : 'my-[2px] w-[39px] border-r border-[#aaa] leading-[6px]'}>{tab}</button>
              ))}
              <span className="ml-auto flex gap-[6px] pr-[4px] leading-[9px]"><button aria-label="Előző">‹</button><button aria-label="Következő">›</button></span>
            </div>
          </div>
        </div>
        <Terminal />
        <StatusBar />
      </main>
      <div className="h-[3px]" />
      <Taskbar />
    </div>
  );
}
